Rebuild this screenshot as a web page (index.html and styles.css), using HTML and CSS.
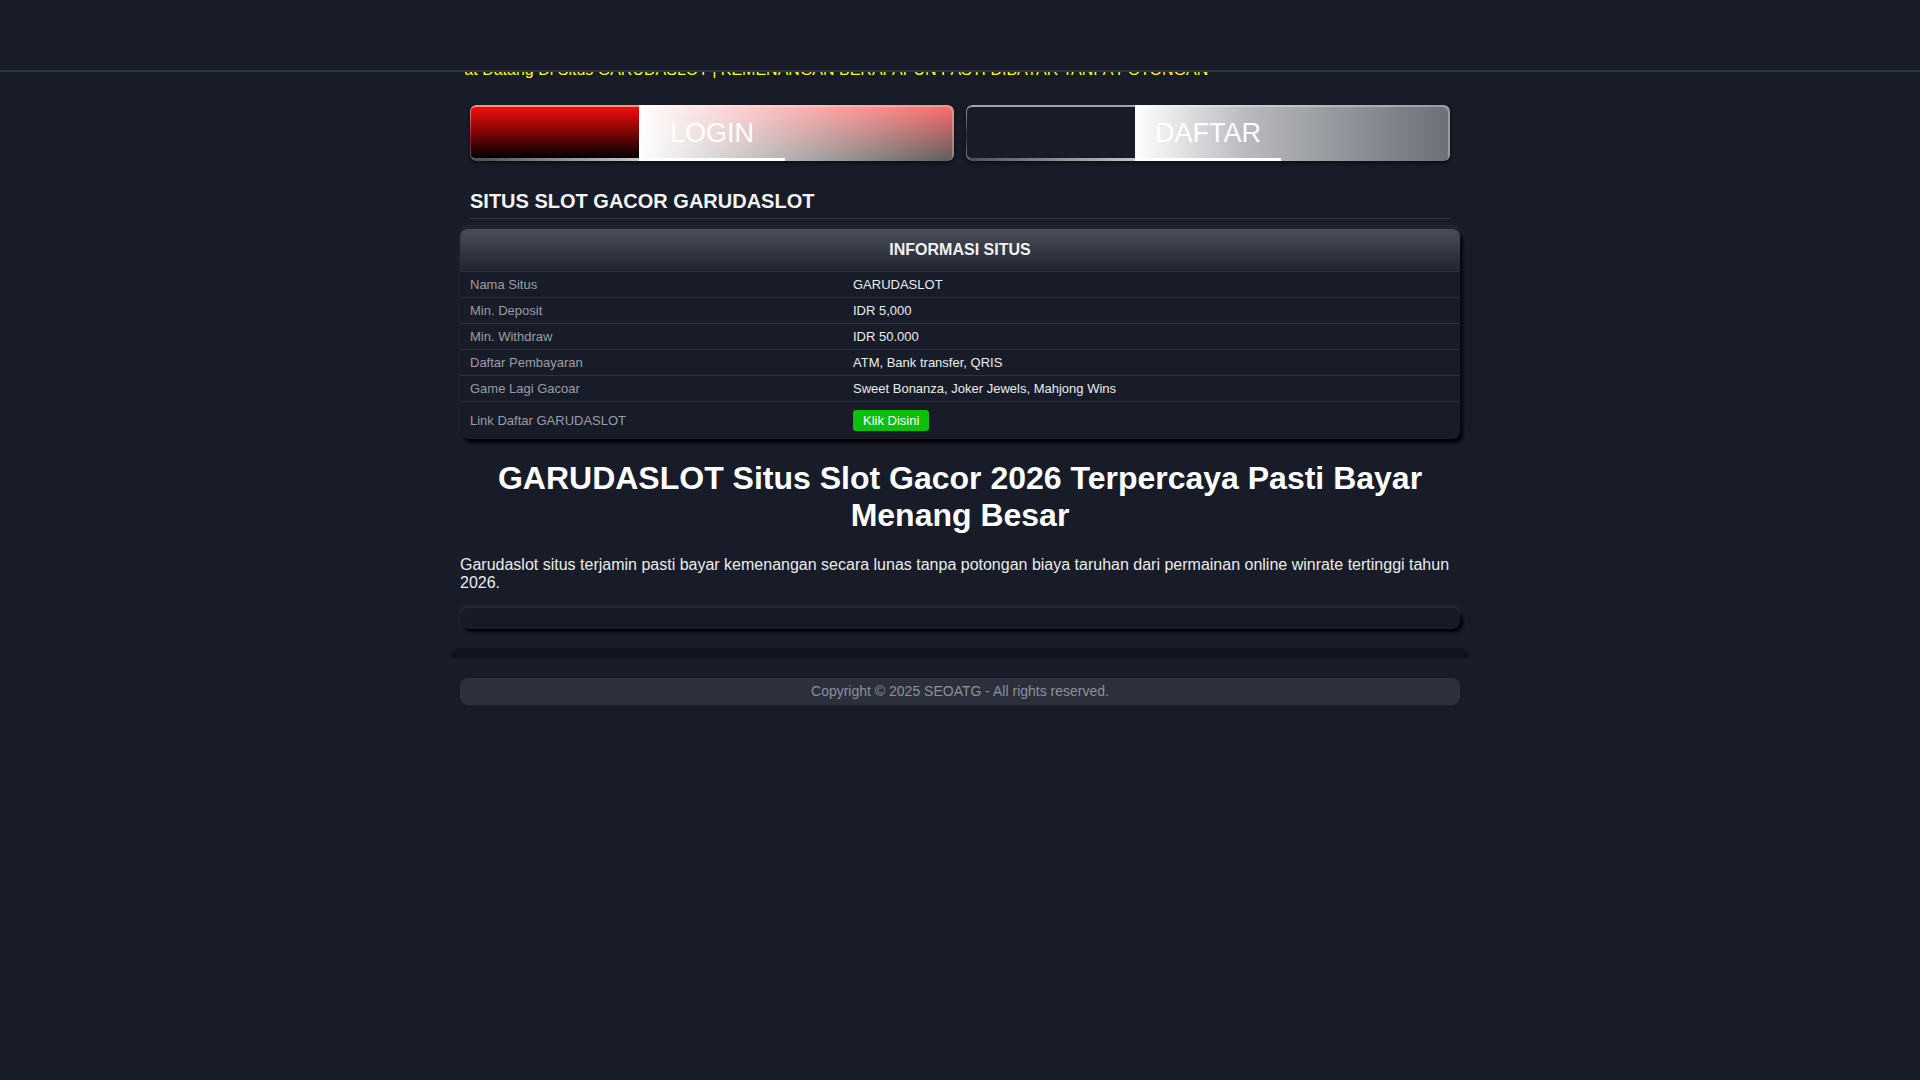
FILE: index.html
```html
<!DOCTYPE html>
<html lang="id">
<head>
<meta charset="utf-8">
<title>GARUDASLOT</title>
<link rel="stylesheet" href="styles.css">
</head>
<body>
<header class="topbar"></header>

<main class="page">
  <div class="marquee"><span class="marquee-text">Selamat Datang Di Situs GARUDASLOT | KEMENANGAN BERAPAPUN PASTI DIBAYAR TANPA POTONGAN</span></div>

  <div class="actions">
    <a class="btn btn-login" href="#">
      <span class="btn-dark"></span>
      <span class="btn-face"></span>
      <span class="btn-label">LOGIN</span>
    </a>
    <a class="btn btn-daftar" href="#">
      <span class="btn-dark"></span>
      <span class="btn-face"></span>
      <span class="btn-label">DAFTAR</span>
    </a>
  </div>

  <h2 class="section-title">SITUS SLOT GACOR GARUDASLOT</h2>

  <div class="info">
    <div class="info-head">INFORMASI SITUS</div>
    <table class="info-table">
      <tr><td class="lbl">Nama Situs</td><td class="val">GARUDASLOT</td></tr>
      <tr><td class="lbl">Min. Deposit</td><td class="val">IDR 5,000</td></tr>
      <tr><td class="lbl">Min. Withdraw</td><td class="val">IDR 50.000</td></tr>
      <tr><td class="lbl">Daftar Pembayaran</td><td class="val">ATM, Bank transfer, QRIS</td></tr>
      <tr><td class="lbl">Game Lagi Gacoar</td><td class="val">Sweet Bonanza, Joker Jewels, Mahjong Wins</td></tr>
      <tr class="last"><td class="lbl">Link Daftar GARUDASLOT</td><td class="val"><a class="klik" href="#">Klik Disini</a></td></tr>
    </table>
  </div>

  <h1 class="main-title">GARUDASLOT Situs Slot Gacor 2026 Terpercaya Pasti Bayar Menang Besar</h1>
  <p class="intro">Garudaslot situs terjamin pasti bayar kemenangan secara lunas tanpa potongan biaya taruhan dari permainan online winrate tertinggi tahun 2026.</p>

  <div class="empty-box"></div>
</main>

<footer class="footer">
  <div class="footer-band"></div>
  <div class="copyright">Copyright © 2025 SEOATG - All rights reserved.</div>
</footer>
</body>
</html>
```

FILE: styles.css
```css
html, body {
  margin: 0;
  padding: 0;
  background: #171c28;
  color: #e8e8e8;
  font-family: "Liberation Sans", Arial, sans-serif;
}

.topbar {
  position: fixed;
  top: 0;
  left: 0;
  right: 0;
  height: 70px;
  background: #171c28;
  border-bottom: 2px solid #2a3347;
  z-index: 10;
}

.page {
  width: 1000px;
  margin: 0 auto;
  padding-top: 61px;
}

.marquee {
  margin: 0 5px;
  height: 18px;
  line-height: 18px;
  overflow: hidden;
  white-space: nowrap;
  font-size: 16px;
  color: #ffff00;
}

.marquee-text {
  display: inline-block;
  margin-left: -46px;
}

.actions {
  display: flex;
  gap: 12px;
  margin-top: 26px;
  padding: 0 10px;
}

.btn {
  position: relative;
  display: flex;
  flex: 1;
  height: 56px;
  border-radius: 6px;
  overflow: hidden;
  text-decoration: none;
  box-shadow: 0 2px 4px rgba(0, 0, 0, 0.55);
}

.btn-dark {
  flex: none;
  width: 169px;
  box-sizing: border-box;
  border-style: solid;
  border-color: transparent;
  border-width: 2px 0 3px 1px;
  border-radius: 6px 0 0 6px;
}

.btn-login .btn-dark {
  background:
    linear-gradient(to bottom, #f40d0d 0%, #8a0606 45%, #000 100%) padding-box,
    linear-gradient(to right, #4a4a4a, #c8c8c8) bottom / 100% 3px no-repeat border-box,
    linear-gradient(to bottom, #ff8f8f, #8a2020 60%, #555 100%) border-box;
}

.btn-daftar .btn-dark {
  background:
    linear-gradient(#171c28, #171c28) padding-box,
    linear-gradient(to right, #4a4e56, #c2c4c8) bottom / 100% 3px no-repeat border-box,
    linear-gradient(to bottom, #a4a8af 0%, #2a2f3a 55%, #8e9299 100%) border-box;
}

.btn-face {
  position: relative;
  flex: 1;
  border-radius: 0 6px 6px 0;
}

.btn-face::after {
  content: "";
  position: absolute;
  left: 0;
  bottom: 0;
  width: 146px;
  height: 3px;
  background: #fff;
}

.btn-login .btn-face {
  background:
    linear-gradient(to right, #fff 0%, rgba(255, 255, 255, 0) 100%),
    linear-gradient(to bottom, #ff6a6a 0%, #5c5c5c 100%);
  box-shadow: inset -2px 2px 0 rgba(255, 255, 255, 0.25);
}

.btn-daftar .btn-face {
  background: linear-gradient(to right, #ffffff 0%, #b9bbbf 35%, #8e9197 70%, #6b6f78 100%);
  box-shadow: inset -2px 2px 0 rgba(255, 255, 255, 0.3);
}

.btn-label {
  position: absolute;
  inset: 0;
  display: flex;
  align-items: center;
  justify-content: center;
  font-size: 27px;
  color: #fff;
}

.section-title {
  margin: 29px 10px 10px;
  padding-bottom: 5px;
  border-bottom: 1px solid #2c3343;
  font-size: 20px;
  line-height: 23px;
  font-weight: bold;
  color: #f4f4f4;
}

.info {
  border-radius: 8px;
  background: #171c28;
  box-shadow: 0 -4px 10px rgba(255, 255, 255, 0.05), 3px 4px 3px rgba(0, 0, 0, 0.85);
}

.info-head {
  height: 42px;
  line-height: 42px;
  text-align: center;
  font-size: 16px;
  font-weight: bold;
  color: #f2f2f2;
  border-radius: 8px 8px 0 0;
  background: linear-gradient(to bottom, #4a4e5a 0%, #1f2430 100%);
}

.info-table {
  width: 100%;
  border-collapse: collapse;
  font-size: 13px;
}

.info-table td {
  padding: 5px 10px;
  line-height: 15px;
  border-top: 1px solid #2b3243;
}

.info-table .lbl {
  width: 363px;
  color: #9a9ea6;
}

.info-table .val {
  color: #ececec;
}

.info-table .last td {
  padding: 8px 10px;
}

.klik {
  display: inline-block;
  vertical-align: middle;
  padding: 3px 10px;
  line-height: 15px;
  border-radius: 3px;
  background: #0cbf0c;
  color: #fff;
  text-decoration: none;
}

.main-title {
  margin: 21px 0 22px;
  font-size: 32px;
  font-weight: bold;
  text-align: center;
  color: #fff;
}

.intro {
  margin: 16px 0;
  font-size: 16px;
  color: #ececec;
}

.empty-box {
  height: 21px;
  border-radius: 8px;
  background: #161b26;
  box-shadow: 0 -2px 4px rgba(255, 255, 255, 0.08), 3px 3px 3px rgba(0, 0, 0, 0.9);
}

.footer {
  width: 1020px;
  margin: 19px auto 0;
}

.footer-band {
  height: 10px;
  border-radius: 10px 10px 0 0;
  background: #10141c;
}

.copyright {
  margin: 20px 10px;
  padding: 5px 0;
  line-height: 17px;
  font-size: 14px;
  text-align: center;
  color: #8d9199;
  background: #2b303c;
  border-radius: 8px;
}
```
